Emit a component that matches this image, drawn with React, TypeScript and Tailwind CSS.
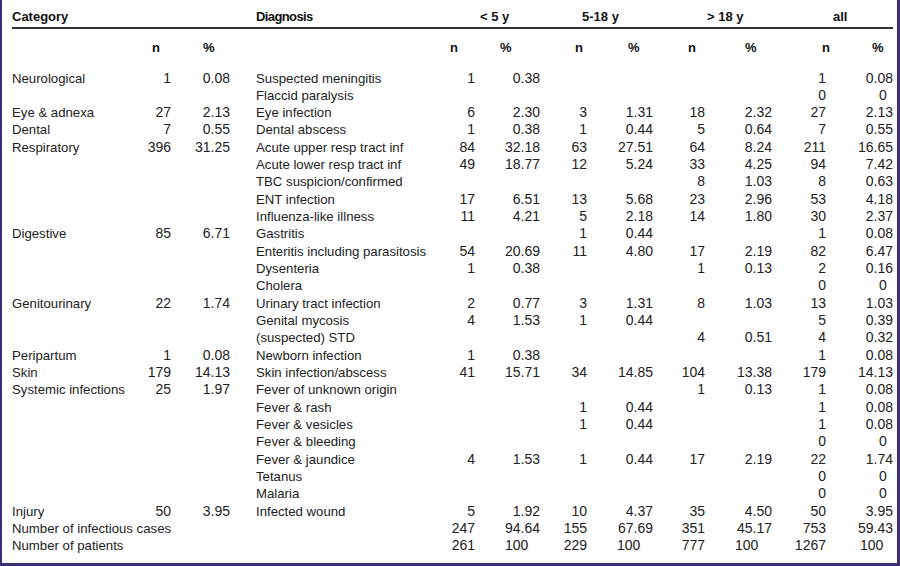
import React from "react";

type Row = string[];

const rows: Row[] = [
  ["Neurological", "1", "0.08", "Suspected meningitis", "1", "0.38", "", "", "", "", "1", "0.08"],
  ["", "", "", "Flaccid paralysis", "", "", "", "", "", "", "0", "0"],
  ["Eye & adnexa", "27", "2.13", "Eye infection", "6", "2.30", "3", "1.31", "18", "2.32", "27", "2.13"],
  ["Dental", "7", "0.55", "Dental abscess", "1", "0.38", "1", "0.44", "5", "0.64", "7", "0.55"],
  ["Respiratory", "396", "31.25", "Acute upper resp tract inf", "84", "32.18", "63", "27.51", "64", "8.24", "211", "16.65"],
  ["", "", "", "Acute lower resp tract inf", "49", "18.77", "12", "5.24", "33", "4.25", "94", "7.42"],
  ["", "", "", "TBC suspicion/confirmed", "", "", "", "", "8", "1.03", "8", "0.63"],
  ["", "", "", "ENT infection", "17", "6.51", "13", "5.68", "23", "2.96", "53", "4.18"],
  ["", "", "", "Influenza-like illness", "11", "4.21", "5", "2.18", "14", "1.80", "30", "2.37"],
  ["Digestive", "85", "6.71", "Gastritis", "", "", "1", "0.44", "", "", "1", "0.08"],
  ["", "", "", "Enteritis including parasitosis", "54", "20.69", "11", "4.80", "17", "2.19", "82", "6.47"],
  ["", "", "", "Dysenteria", "1", "0.38", "", "", "1", "0.13", "2", "0.16"],
  ["", "", "", "Cholera", "", "", "", "", "", "", "0", "0"],
  ["Genitourinary", "22", "1.74", "Urinary tract infection", "2", "0.77", "3", "1.31", "8", "1.03", "13", "1.03"],
  ["", "", "", "Genital mycosis", "4", "1.53", "1", "0.44", "", "", "5", "0.39"],
  ["", "", "", "(suspected) STD", "", "", "", "", "4", "0.51", "4", "0.32"],
  ["Peripartum", "1", "0.08", "Newborn infection", "1", "0.38", "", "", "", "", "1", "0.08"],
  ["Skin", "179", "14.13", "Skin infection/abscess", "41", "15.71", "34", "14.85", "104", "13.38", "179", "14.13"],
  ["Systemic infections", "25", "1.97", "Fever of unknown origin", "", "", "", "", "1", "0.13", "1", "0.08"],
  ["", "", "", "Fever & rash", "", "", "1", "0.44", "", "", "1", "0.08"],
  ["", "", "", "Fever & vesicles", "", "", "1", "0.44", "", "", "1", "0.08"],
  ["", "", "", "Fever & bleeding", "", "", "", "", "", "", "0", "0"],
  ["", "", "", "Fever & jaundice", "4", "1.53", "1", "0.44", "17", "2.19", "22", "1.74"],
  ["", "", "", "Tetanus", "", "", "", "", "", "", "0", "0"],
  ["", "", "", "Malaria", "", "", "", "", "", "", "0", "0"],
  ["Injury", "50", "3.95", "Infected wound", "5", "1.92", "10", "4.37", "35", "4.50", "50", "3.95"],
  ["Number of infectious cases", "", "", "", "247", "94.64", "155", "67.69", "351", "45.17", "753", "59.43"],
  ["Number of patients", "", "", "", "261", "100", "229", "100", "777", "100", "1267", "100"],
];

const GRID =
  "grid grid-cols-[128px_31px_59px_26px_184px_35px_65px_47px_66px_52px_67px_54px_67px]";

// column indexes in data -> grid column (skip spacer col 3)
function cellClass(di: number, v: string): string {
  const num = "text-[14px] whitespace-nowrap";
  if (di === 0) return "text-left whitespace-nowrap text-[13.2px] overflow-visible";
  if (di === 3) return "text-left whitespace-nowrap text-[13.2px]";
  if (v === "100") {
    if (di === 11) return num + " text-left pl-[34px]";
    return num + " text-left pl-[30px]";
  }
  if (v === "0" && di === 11) return num + " text-left pl-[53px]";
  return num + " text-right";
}

function DataRow({ r }: { r: Row }) {
  const cells = [r[0], r[1], r[2], null, r[3], r[4], r[5], r[6], r[7], r[8], r[9], r[10], r[11]];
  let di = -1;
  return (
    <div className={GRID + " h-[17.33px] leading-[17.33px]"}>
      {cells.map((c, i) => {
        if (c === null) return <div key={i} />;
        di++;
        return (
          <div key={i} className={cellClass(di, c)}>
            {c}
          </div>
        );
      })}
    </div>
  );
}

export default function App() {
  return (
    <div
      className="w-[900px] h-[566px] bg-white border-l-2 border-r-[3px] border-b-[3px] border-[#3c2f78] pl-[10px] text-[#222] overflow-hidden"
      style={{ fontFamily: '"Liberation Sans", Arial, sans-serif' }}
    >
      <div className="w-[881px]">
        {/* header row 1 */}
        <div className={GRID + " h-[27px] pt-[5px] items-center font-bold text-[13px] leading-[17px] text-[#111]"}>
          <div className="col-span-3">Category</div>
          <div />
          <div className="tracking-[-0.6px]">Diagnosis</div>
          <div className="col-span-2 pl-[40px] whitespace-nowrap">&lt; 5 y</div>
          <div className="col-span-2 pl-[42px] whitespace-nowrap">5-18 y</div>
          <div className="col-span-2 pl-[54px] whitespace-nowrap">&gt; 18 y</div>
          <div className="col-span-2 pl-[61px] whitespace-nowrap">all</div>
        </div>
        <div className="h-[1.5px] bg-[#333]" />
        {/* header row 2 */}
        <div className={GRID + " h-[41px] pt-[10px] font-bold text-[13px] leading-[17px] text-[#111]"}>
          <div />
          <div className="pl-[12px]">n</div>
          <div className="pl-[32px]">%</div>
          <div />
          <div />
          <div className="pl-[10px]">n</div>
          <div className="pl-[25px]">%</div>
          <div className="pl-[35px]">n</div>
          <div className="pl-[41px]">%</div>
          <div className="pl-[35px]">n</div>
          <div className="pl-[40px]">%</div>
          <div className="pl-[50px]">n</div>
          <div className="pl-[46px]">%</div>
        </div>
        {rows.map((r, i) => (
          <DataRow key={i} r={r} />
        ))}
      </div>
    </div>
  );
}
